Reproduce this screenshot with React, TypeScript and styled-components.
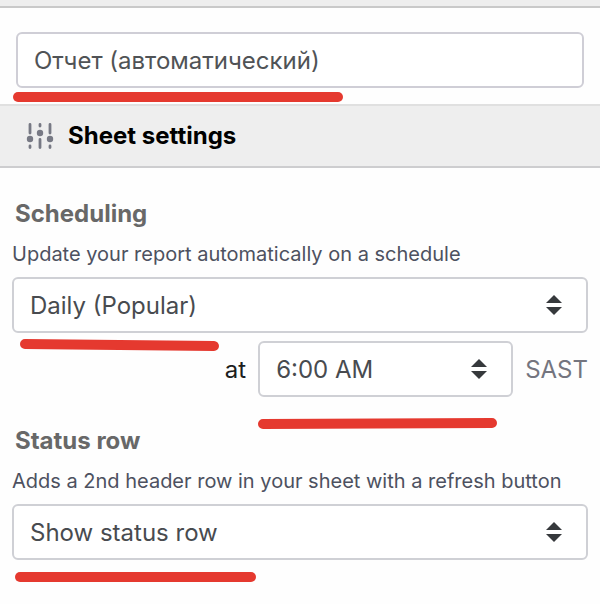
import React, { useState } from "react";
import styled, { createGlobalStyle } from "styled-components";

const GlobalStyle = createGlobalStyle`
  *, *::before, *::after { box-sizing: border-box; }
  body {
    margin: 0;
    background: #fefefe;
    color: #1c1d20;
    font-family: Inter, "Liberation Sans", sans-serif;
  }
`;

const Panel = styled.main`
  display: flex;
  flex-direction: column;
  min-height: 100vh;
`;

const TopEdge = styled.div`
  height: 8px;
  background: #eeeeee;
  border-bottom: 2px solid #c9c9c9;
`;

const NameArea = styled.div`
  padding: 24px 16px 16px;
`;

const Field = styled.div<{ $width?: string }>`
  position: relative;
  width: ${({ $width }) => $width ?? "100%"};
`;

const TextInput = styled.input`
  display: block;
  width: 100%;
  height: 56px;
  padding: 0 16px;
  border: 2px solid #cfced6;
  border-radius: 6px;
  background: #ffffff;
  color: #505356;
  font: inherit;
  font-size: 24px;
`;

const SelectBox = styled.select`
  display: block;
  appearance: none;
  width: 100%;
  height: 56px;
  padding: 0 56px 0 16px;
  border: 2px solid #cfd0d5;
  border-radius: 6px;
  background: #ffffff;
  color: #484b4f;
  font: inherit;
  font-size: 24px;
`;

const Arrows = styled.svg`
  position: absolute;
  top: 18px;
  right: 26px;
  width: 16px;
  height: 20px;
  fill: #36393c;
  pointer-events: none;
`;

const Mark = styled.svg<{ $top: number; $left: number }>`
  position: absolute;
  z-index: 1;
  top: ${({ $top }) => $top}px;
  left: ${({ $left }) => $left}px;
  overflow: visible;
  pointer-events: none;
  stroke: #e5392f;
  stroke-width: 10;
  stroke-linecap: round;
`;

const SettingsHeader = styled.header`
  display: flex;
  align-items: center;
  gap: 14px;
  height: 64px;
  padding: 0 26px;
  background: #eeeeee;
  border-top: 2px solid #e0e0e0;
  border-bottom: 2px solid #cdcdcf;
`;

const HeaderTitle = styled.h1`
  margin: 0;
  color: #000000;
  font-size: 24px;
  line-height: 32px;
  font-weight: 700;
`;

const Sections = styled.div`
  display: flex;
  flex-direction: column;
  gap: 28px;
  padding: 30px 12px;
`;

const Section = styled.section`
  display: flex;
  flex-direction: column;
`;

const SectionTitle = styled.h2`
  margin: 0 0 12px;
  padding-left: 3px;
  color: #686868;
  font-size: 24px;
  line-height: 32px;
  font-weight: 700;
`;

const Description = styled.label`
  margin-bottom: 11px;
  color: #4d5160;
  font-size: 20px;
  line-height: 24px;
`;

const TimeRow = styled.div`
  display: flex;
  align-items: center;
  justify-content: flex-end;
  gap: 12px;
  margin-top: 8px;
  font-size: 24px;
`;

const Zone = styled.span`
  color: #74757f;
`;

function SlidersIcon() {
  return (
    <svg width="28" height="28" viewBox="0 0 28 28" fill="#777984" stroke="#777984" aria-hidden="true">
      <g strokeWidth="2.8" strokeLinecap="round">
        <path d="M4 2.5V11M4 24V25.5M14 2.5V4M14 17.5V25.5M24 2.5V11M24 24V25.5" />
      </g>
      <g stroke="none">
        <circle cx="4" cy="17" r="3.2" />
        <circle cx="14" cy="11" r="3.2" />
        <circle cx="24" cy="17" r="3.2" />
      </g>
    </svg>
  );
}

interface UnderlineProps {
  top: number;
  left: number;
  length: number;
  rise?: number;
}

function Underline({ top, left, length, rise = 0 }: UnderlineProps) {
  return (
    <Mark $top={top} $left={left} width={length} height={10} aria-hidden="true">
      <line x1={5} y1={5} x2={length - 5} y2={5 + rise} />
    </Mark>
  );
}

interface PickerProps {
  id: string;
  options: string[];
  width?: string;
  children?: React.ReactNode;
}

function Picker({ id, options, width, children }: PickerProps) {
  return (
    <Field $width={width}>
      <SelectBox id={id}>
        {options.map((option) => (
          <option key={option}>{option}</option>
        ))}
      </SelectBox>
      <Arrows viewBox="0 0 16 20" aria-hidden="true">
        <path d="M8 0L16 8H0ZM0 12H16L8 20Z" />
      </Arrows>
      {children}
    </Field>
  );
}

export default function App() {
  const [name, setName] = useState("Отчет (автоматический)");

  return (
    <>
      <GlobalStyle />
      <Panel>
        <TopEdge />
        <NameArea>
          <Field>
            <TextInput
              aria-label="Report name"
              value={name}
              onChange={(event) => setName(event.target.value)}
            />
            <Underline top={60} left={-3} length={330} />
          </Field>
        </NameArea>
        <SettingsHeader>
          <SlidersIcon />
          <HeaderTitle>Sheet settings</HeaderTitle>
        </SettingsHeader>
        <Sections>
          <Section>
            <SectionTitle>Scheduling</SectionTitle>
            <Description htmlFor="frequency">Update your report automatically on a schedule</Description>
            <Picker id="frequency" options={["Daily (Popular)"]}>
              <Underline top={62} left={8} length={199} rise={2} />
            </Picker>
            <TimeRow>
              <label htmlFor="time">at</label>
              <Picker id="time" width="255px" options={["6:00 AM"]}>
                <Underline top={78} left={0} length={239} rise={-1} />
              </Picker>
              <Zone>SAST</Zone>
            </TimeRow>
          </Section>
          <Section>
            <SectionTitle>Status row</SectionTitle>
            <Description htmlFor="status-row">Adds a 2nd header row in your sheet with a refresh button</Description>
            <Picker id="status-row" options={["Show status row"]}>
              <Underline top={68} left={3} length={241} />
            </Picker>
          </Section>
        </Sections>
      </Panel>
    </>
  );
}
